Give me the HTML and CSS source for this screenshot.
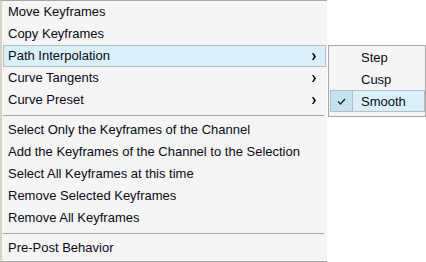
FILE: index.html
```html
<!DOCTYPE html>
<html>
<head>
<meta charset="utf-8">
<link rel="stylesheet" href="styles.css">
</head>
<body>
<div class="screen">
  <div class="menu">
    <div class="item">Move Keyframes</div>
    <div class="item">Copy Keyframes</div>
    <div class="item active">Path Interpolation<svg class="arrow" width="4" height="7" viewBox="0 0 4 7"><path d="M0 0H1.5L4 3.5L1.5 7H0L2 3.5Z" fill="#000"/></svg></div>
    <div class="item">Curve Tangents<svg class="arrow" width="4" height="7" viewBox="0 0 4 7"><path d="M0 0H1.5L4 3.5L1.5 7H0L2 3.5Z" fill="#000"/></svg></div>
    <div class="item">Curve Preset<svg class="arrow" width="4" height="7" viewBox="0 0 4 7"><path d="M0 0H1.5L4 3.5L1.5 7H0L2 3.5Z" fill="#000"/></svg></div>
    <div class="sep"></div>
    <div class="item">Select Only the Keyframes of the Channel</div>
    <div class="item">Add the Keyframes of the Channel to the Selection</div>
    <div class="item">Select All Keyframes at this time</div>
    <div class="item">Remove Selected Keyframes</div>
    <div class="item">Remove All Keyframes</div>
    <div class="sep"></div>
    <div class="item">Pre-Post Behavior</div>
  </div>
  <div class="submenu">
    <div class="sitem"><span class="check"></span><span class="label">Step</span></div>
    <div class="sitem"><span class="check"></span><span class="label">Cusp</span></div>
    <div class="sitem active"><span class="check"><svg width="9" height="7" viewBox="0 0 9 7"><path d="M1 3.5L3.5 6L8 1" fill="none" stroke="#222" stroke-width="1.3"/></svg></span><span class="label">Smooth</span></div>
  </div>
</div>
</body>
</html>
```
FILE: styles.css
```css
html, body {
  margin: 0;
  padding: 0;
  background: #ffffff;
}
body {
  font-family: "Liberation Sans", Arial, sans-serif;
  font-size: 13px;
  color: #0a0a14;
}
.screen {
  display: flex;
  align-items: flex-start;
  width: 426px;
  height: 262px;
  overflow: hidden;
}
.menu {
  box-sizing: border-box;
  width: 327px;
  height: 262px;
  background: #f5f5f5;
  border-top: 1px solid #a8a8a8;
  border-bottom: 1px solid #a8a8a8;
  border-left: 2px solid #d6d2c4;
  padding: 0 1px 1px 1px;
  flex-shrink: 0;
}
.item {
  box-sizing: border-box;
  height: 22px;
  line-height: 22px;
  padding-left: 4px;
  padding-right: 9px;
  display: flex;
  align-items: center;
  justify-content: space-between;
  white-space: nowrap;
  border: 1px solid transparent;
}
.item.active {
  background: #d9f0fb;
  border-color: #b8bec2;
}
.arrow {
  display: block;
}
.sep {
  height: 8px;
  display: flex;
  align-items: center;
}
.sep::before {
  content: "";
  display: block;
  height: 1px;
  width: 321px;
  background: #a4a4a4;
}
.submenu {
  box-sizing: border-box;
  margin-top: 45px;
  margin-left: 1px;
  width: 98px;
  height: 72px;
  background: #f5f5f5;
  border: 1px solid #a8a8a8;
  padding: 0 0 3px 1px;
  flex-shrink: 0;
}
.sitem {
  box-sizing: border-box;
  height: 22px;
  display: flex;
  align-items: center;
  border: 1px solid transparent;
  white-space: nowrap;
}
.sitem .check {
  box-sizing: border-box;
  width: 22px;
  height: 100%;
  display: flex;
  align-items: center;
  justify-content: center;
  border-right: 1px solid transparent;
  margin-right: 8px;
}
.sitem.active {
  background: #d9f0fb;
  border-color: #b8bec2;
}
.sitem.active .check {
  background: #c5e2f1;
  border-right-color: #b8bec2;
}
.check svg {
  display: block;
}
```
